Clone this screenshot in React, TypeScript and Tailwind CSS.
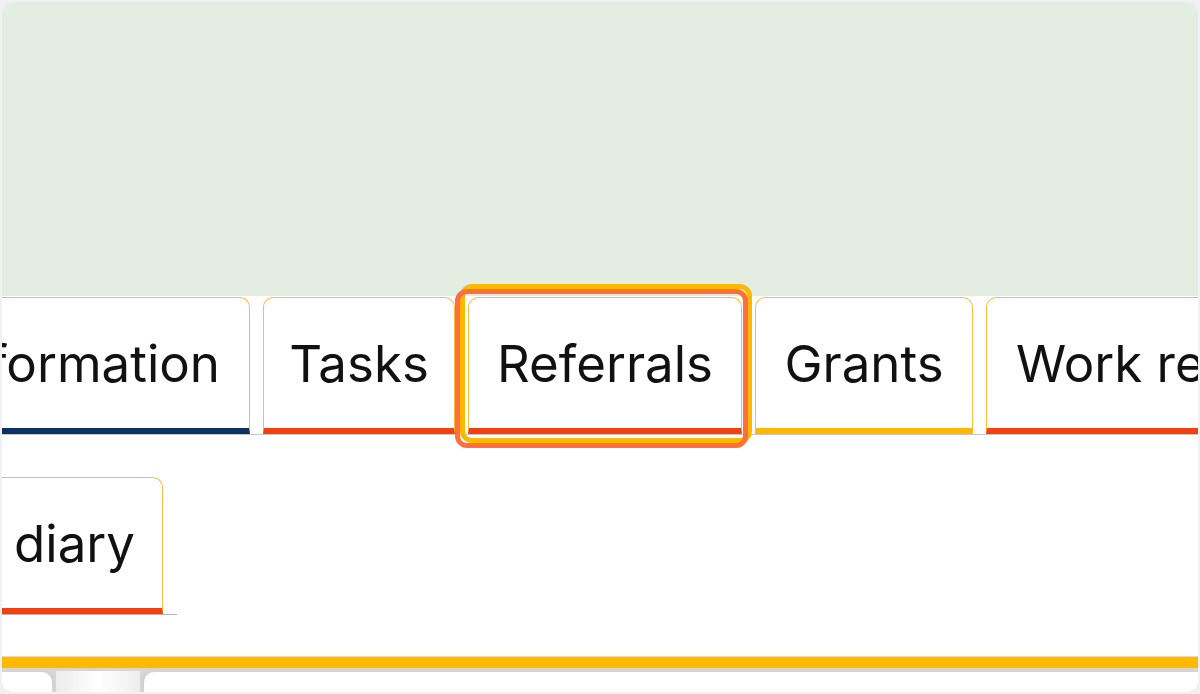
import React from 'react';

type TabProps = {
  label: string;
  bar: string;
  className?: string;
  children?: React.ReactNode;
};

const Tab: React.FC<TabProps> = ({ label, bar, className = '', children }) => (
  <div
    className={`relative h-[137px] shrink-0 flex items-center bg-white border border-[#ffbb3a] border-b-[6px] rounded-t-[10px] text-[51px] leading-none text-[#111] whitespace-nowrap ${bar} ${className}`}
  >
    {children}
    <span>{label}</span>
  </div>
);

export default function App() {
  return (
    <div className="w-[1200px] h-[694px] bg-[#f1f0f5] p-[2px]" style={{ fontFamily: 'Inter, "Noto Sans", sans-serif' }}>
      <div className="h-full rounded-[10px] overflow-hidden bg-white flex flex-col">
        {/* header area */}
        <div className="h-[294px] shrink-0 bg-[#e3ede2]" />

        {/* main tab row */}
        <div className="pt-px flex gap-[13px] border-b border-[#c9c9c9]">
          <Tab
            label="Information"
            bar="border-b-[#0c3262]"
            className="w-[248px] justify-end pr-[29px] border-l-0 rounded-tl-none overflow-hidden"
          />
          <Tab label="Tasks" bar="border-b-[#f2400e]" className="w-[192px] justify-center" />
          <Tab label="Referrals" bar="border-b-[#f2400e]" className="w-[274px] justify-center">
            {/* focus highlight */}
            <div className="absolute left-[-9px] top-[-14px] w-[292px] h-[159px] rounded-[12px] border-[5px] border-[#ffb800]" />
            <div className="absolute left-[-14px] top-[-9px] w-[293px] h-[159px] rounded-[12px] border-[5px] border-[#ff6f3d]" />
          </Tab>
          <Tab label="Grants" bar="border-b-[#ffb800]" className="w-[218px] justify-center" />
          <Tab label="Work records" bar="border-b-[#f2400e]" className="w-[260px] pl-[29px] border-r-0 rounded-tr-none" />
        </div>

        {/* second tab row */}
        <div className="mt-[42px] w-[175px] flex border-b border-[#b5b5b5]">
          <Tab
            label="diary"
            bar="border-b-[#f2400e]"
            className="w-[161px] justify-end pr-[27px] border-l-0 rounded-tl-none"
          />
        </div>

        {/* section divider */}
        <div className="mt-[41px] border-t border-[#ffd98a] h-[12px] bg-[#ffb900] shrink-0" />
        <div className="flex-1 flex bg-[#d6d6d6] pt-[4px]">
          <div className="w-[50px] bg-white rounded-tr-[10px] shadow-[2px_0_3px_#d0d0d0]" />
          <div className="w-[84px] mx-[4px] -mt-[1px] bg-gradient-to-r from-[#ececec] via-white to-[#eeeeee]" />
          <div className="flex-1 bg-white rounded-tl-[10px] shadow-[-2px_0_3px_#d0d0d0]" />
        </div>
      </div>
    </div>
  );
}
